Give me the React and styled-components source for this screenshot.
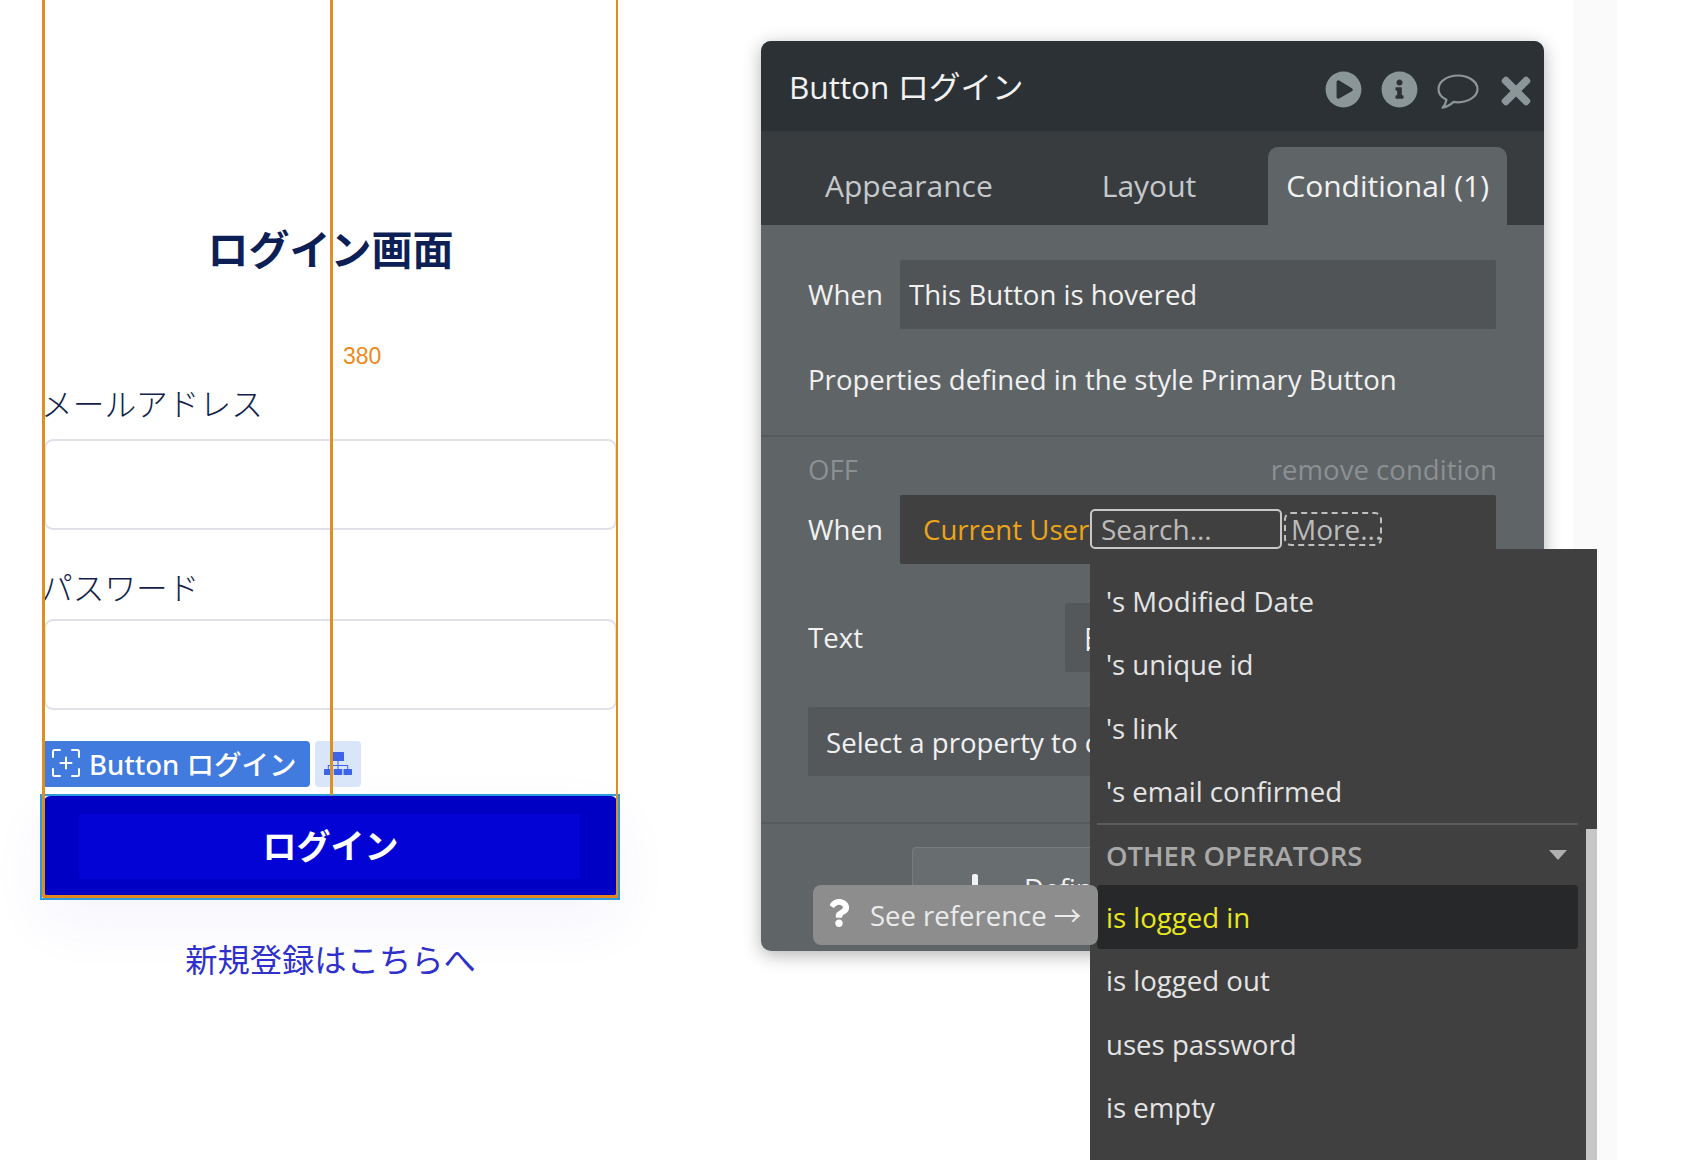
import React from 'react';
import styled, { createGlobalStyle } from 'styled-components';
import { FaPlayCircle, FaInfoCircle, FaTimes, FaQuestion, FaPlus } from 'react-icons/fa';

const Global = createGlobalStyle`
  html, body { margin: 0; padding: 0; background: #fff; }
  * { box-sizing: border-box; }
`;
const UI = `"Open Sans", "Noto Sans CJK JP", sans-serif`;
const JP = `"Noto Sans CJK JP", "Liberation Sans", sans-serif`;

const Page = styled.div`
  position: relative; display: flex; width: 1682px; height: 1160px; overflow: hidden; background: #fff;
`;
const Canvas = styled.div`
  position: relative; width: 761px; flex: none; padding: 223px 0 0 44px;
`;
const Form = styled.div`
  display: flex; flex-direction: column; width: 573px; font-family: ${JP};
`;
const Title = styled.h1`
  margin: 0; height: 48px; line-height: 48px; font-size: 41px; font-weight: 700; text-align: center; color: #0d1f55;
`;
const FieldLabel = styled.div`
  margin: ${p => p.$top}px 0 0 -3px; height: 44px; line-height: 44px; font-size: 31.700px; font-weight: 300; color: #12224a; white-space: nowrap;
`;
const TextInput = styled.div`
  margin-top: ${p => p.$top}px; height: 91px; border: 2px solid #e0e1e8; border-radius: 9px; background: #fff;
`;
const TagRow = styled.div`
  display: flex; gap: 5px; margin-top: 31px; height: 46px; position: relative; z-index: 1;
`;
const NameTag = styled.div`
  display: flex; align-items: center; gap: 9px; width: 266px; padding: 0 0 2px 8px; background: #417bdd; border-radius: 0 4px 4px 0;
  color: #fff; font-family: "Noto Sans", ${JP}; font-size: 27.500px; font-weight: 500; white-space: nowrap;
`;
const TreeTag = styled.div`
  display: flex; align-items: center; justify-content: center; width: 46px; background: #d9e5f8; border-radius: 4px; color: #3d63e8;
`;
const LoginButton = styled.div`
  position: relative; display: flex; align-items: center; justify-content: center; margin-top: 9px; height: 101.500px; padding-bottom: 4px;
  background: #0000c4; border-radius: 6px; box-shadow: 0 24px 60px rgba(70, 70, 220, .06);
  color: #fff; font-size: 34px; font-weight: 700;
`;
const ButtonInner = styled.div`
  position: absolute; left: 35px; right: 37px; top: 18px; bottom: 18px; background: #0303d6;
`;
const ButtonText = styled.span`
  position: relative;
`;
const Outline = styled.div`
  position: absolute; left: -4px; right: -3px; top: -2px; bottom: -3px; border: 2.500px solid #2f9bdc; pointer-events: none;
`;
const RegisterLink = styled.div`
  margin-top: 39px; height: 44px; line-height: 44px; font-size: 32.300px; font-weight: 400; text-align: center; color: #3030cc;
`;
const Guide = styled.div`
  position: absolute; top: 0; left: ${p => p.$x}px; width: 2.500px; height: ${p => p.$h}px; background: #df8f1f; z-index: 2;
`;
const GuideBase = styled.div`
  position: absolute; left: 43px; top: 895px; width: 575px; height: 3px; background: #e0881f; z-index: 2;
`;
const Measure = styled.div`
  position: absolute; left: 343px; top: 342px; font: 23px/28px "Liberation Sans", sans-serif; color: #ec8a1c; z-index: 2;
`;

const Panel = styled.section`
  display: flex; flex-direction: column; width: 783px; height: 910px; margin-top: 41px; flex: none; overflow: hidden;
  border-radius: 10px; background: #5f6467; box-shadow: 0 4px 18px rgba(0, 0, 0, .3); font-family: ${UI}; color: #f1f1f1;
`;
const Strip = styled.div`
  width: 44px; height: 100%; margin-left: 29px; background: #fafafa; flex: none;
`;
const Header = styled.header`
  display: flex; align-items: center; height: 90px; padding: 0 14px 0 28px; background: #2c3135; flex: none;
`;
const HeaderTitle = styled.div`
  flex: 1; font-size: 31.500px; margin-top: -2px; color: #f2f2f2; white-space: nowrap;
`;
const Icons = styled.div`
  display: flex; align-items: center; gap: 19px; margin-top: 7px; color: #8b9699;
`;
const CloseIcon = styled(FaTimes)`
  margin: 0 -7px 0 -3px; transform: translateY(1px);
`;
const BubbleSvg = styled.svg`
  transform: translateY(2px);
`;
const TabBar = styled.nav`
  display: flex; align-items: flex-end; height: 94px; padding-left: 46px; background: #383c3f; flex: none;
`;
const Tab = styled.div`
  height: 78px; margin-left: ${p => p.$gap}px; padding: 0 18px; line-height: 78px; font-size: 30px; white-space: nowrap;
  border-radius: 10px 10px 0 0; color: ${p => (p.$active ? '#f2f2f2' : '#c5c9cb')}; background: ${p => (p.$active ? '#5f6467' : 'transparent')};
`;
const Section = styled.div`
  padding: ${p => p.$pad}; padding-left: 47px; padding-right: 48px; border-bottom: 2px solid #565a5d; flex: none;
`;
const Row = styled.div`
  display: flex; align-items: center; margin-top: ${p => p.$top || 0}px;
`;
const RowLabel = styled.div`
  width: ${p => p.$w}px; flex: none; padding-bottom: 2px; font-size: 27.600px; color: #f1f1f1;
`;
const Field = styled.div`
  flex: 1; display: flex; align-items: center; height: 69px; padding: 0 0 ${p => (p.$flat ? 0 : 2)}px ${p => p.$pad}px; min-width: 0; overflow: hidden;
  background: ${p => p.$bg}; font-size: 27.600px; white-space: nowrap; border-radius: 2px; color: #f1f1f1;
`;
const Plain = styled.div`
  margin-top: 28px; height: 44px; line-height: 44px; font-size: 27.600px; white-space: nowrap;
`;
const SpaceRow = styled.div`
  display: flex; justify-content: space-between; height: 40px; margin-right: -1px; line-height: 40px; font-size: 27.600px; color: #8b9093;
`;
const Operand = styled.span`
  width: 167px; flex: none; color: #eaa51a;
`;
const SearchBox = styled.div`
  width: 192px; height: 40px; flex: none; padding-left: 9px; line-height: 36px; border: 2px solid #c8c8c8; border-radius: 5px; color: #bbb; font-size: 28px;
`;
const MoreBox = styled.div`
  width: 98px; height: 34px; margin-left: 2px; flex: none; padding-left: 5px; line-height: 30px; border: 2px dashed #c0c0c0; border-radius: 7px; color: #bbb; font-size: 28px;
`;
const DefineButton = styled.div`
  display: flex; align-items: center; gap: 33px; width: 500px; height: 86px; margin: 23px 0 0 151px; padding: 0 0 5px 46px; white-space: nowrap;
  background: #686d70; border: 1px solid #787c7f; border-radius: 4px; font-size: 27.600px; color: #f1f1f1;
`;

const Dropdown = styled.div`
  position: absolute; left: 1090px; top: 549px; width: 507px; height: 611px; padding: 20.500px 19px 0 0; background: #404040; font-family: ${UI}; z-index: 3;
`;
const Thumb = styled.div`
  position: absolute; right: 0; top: 280px; bottom: 0; width: 11px; background: #c6c6c6;
`;
const Item = styled.div`
  display: flex; align-items: center; height: 63.300px; margin-left: 7px; padding-left: 9px; font-size: 27.600px; white-space: nowrap; border-radius: 4px;
  color: ${p => (p.$selected ? '#e8e81e' : '#e4e4e4')}; background: ${p => (p.$selected ? '#272829' : 'transparent')};
`;
const Group = styled.div`
  display: flex; align-items: center; justify-content: space-between; height: 62.800px; margin-left: 7px; padding: 0 11px 0 9px;
  border-top: 2px solid #5b5b5b; font-size: 27.400px; font-weight: 600; color: #a9a9a9;
`;
const Caret = styled.span`
  width: 0; height: 0; border-left: 9px solid transparent; border-right: 9px solid transparent; border-top: 10px solid #b0b0b0;
`;
const Tooltip = styled.div`
  position: absolute; left: 813px; top: 885px; width: 285px; height: 60px; display: flex; align-items: center; gap: 17px; padding: 0 0 2px 12px;
  background: #8d8d8d; border-radius: 8px; font-family: ${UI}; font-size: 27.500px; color: #ebebeb; white-space: nowrap; z-index: 4;
`;
const HelpIcon = styled.span`
  display: flex; margin-top: -3px; color: #fff;
`;

const Frame = () => (
  <svg width="28" height="28" viewBox="0 0 28 28" fill="none" stroke="currentColor" strokeWidth="2" strokeLinecap="round">
    <path d="M1 8V2.500A1.500 1.500 0 0 1 2.500 1H8M20 1h5.500A1.500 1.500 0 0 1 27 2.500V8M27 20v5.500a1.500 1.500 0 0 1-1.500 1.500H20M8 27H2.500A1.500 1.500 0 0 1 1 25.500V20M14 8.500v11M8.500 14h11" />
  </svg>
);
const Bubble = () => (
  <BubbleSvg width="42" height="36" viewBox="0 0 42 36" fill="none" stroke="currentColor" strokeWidth="2.200" strokeLinejoin="round">
    <path d="M21 1.500C10.500 1.500 1.500 7.500 1.500 15c0 4.500 3 8.400 8 10.800-.6 3-1.800 5.700-4 8 4.400-1 8.300-3.200 11-5.900 1.400.3 3 .4 4.500.4 10.500 0 19.500-6 19.500-13.300S31.500 1.500 21 1.500z" />
  </BubbleSvg>
);
const Tree = () => (
  <svg width="28" height="23" viewBox="0 0 28 23" fill="currentColor">
    <rect x="8" y="0" width="12" height="9" rx="0.500" />
    <rect x="13.500" y="9" width="1" height="8" />
    <rect x="4" y="13" width="20" height="1" />
    <rect x="3.800" y="13" width="1" height="4" />
    <rect x="23.200" y="13" width="1" height="4" />
    <rect x="0" y="17" width="8.500" height="6" rx="0.500" />
    <rect x="9.750" y="17" width="8.500" height="6" rx="0.500" />
    <rect x="19.500" y="17" width="8.500" height="6" rx="0.500" />
  </svg>
);

const rows = ["'s Modified Date", "'s unique id", "'s link", "'s email confirmed"];
const more = ['is logged out', 'uses password', 'is empty'];

export default function App() {
  return (
    <Page>
      <Global />
      <Canvas>
        <Guide $x={42} $h={897} />
        <Guide $x={330} $h={795} />
        <Guide $x={615.5} $h={897} />
        <GuideBase />
        <Measure>380</Measure>
        <Form>
          <Title>ログイン画面</Title>
          <FieldLabel $top={109}>メールアドレス</FieldLabel>
          <TextInput $top={15} />
          <FieldLabel $top={34}>パスワード</FieldLabel>
          <TextInput $top={10.5} />
          <TagRow>
            <NameTag><Frame />Button ログイン</NameTag>
            <TreeTag><Tree /></TreeTag>
          </TagRow>
          <LoginButton>
            <ButtonInner />
            <ButtonText>ログイン</ButtonText>
            <Outline />
          </LoginButton>
          <RegisterLink>新規登録はこちらへ</RegisterLink>
        </Form>
      </Canvas>

      <Panel>
        <Header>
          <HeaderTitle>Button ログイン</HeaderTitle>
          <Icons>
            <FaPlayCircle size={37} />
            <FaInfoCircle size={37} />
            <Bubble />
            <CloseIcon size={42} />
          </Icons>
        </Header>
        <TabBar>
          <Tab $gap={0}>Appearance</Tab>
          <Tab $gap={73}>Layout</Tab>
          <Tab $gap={54} $active>Conditional (1)</Tab>
        </TabBar>
        <Section $pad="35px 0 34px">
          <Row>
            <RowLabel $w={92}>When</RowLabel>
            <Field $bg="#505457" $pad={9}>This Button is hovered</Field>
          </Row>
          <Plain>Properties defined in the style Primary Button</Plain>
        </Section>
        <Section $pad="12px 0 46px">
          <SpaceRow><span>OFF</span><span>remove condition</span></SpaceRow>
          <Row $top={6}>
            <RowLabel $w={92}>When</RowLabel>
            <Field $bg="#404040" $pad={23}>
              <Operand>Current User</Operand>
              <SearchBox>Search...</SearchBox>
              <MoreBox>More...</MoreBox>
            </Field>
          </Row>
          <Row $top={39}>
            <RowLabel $w={257}>Text</RowLabel>
            <Field $bg="#54585b" $pad={17}>日本語</Field>
          </Row>
          <Row $top={35}>
            <Field $bg="#54585b" $pad={18} $flat>Select a property to change when true</Field>
          </Row>
        </Section>
        <DefineButton><FaPlus size={32} />Define another condition</DefineButton>
      </Panel>
      <Strip />

      <Dropdown>
        {rows.map(r => <Item key={r}>{r}</Item>)}
        <Group>OTHER OPERATORS<Caret /></Group>
        <Item $selected>is logged in</Item>
        {more.map(r => <Item key={r}>{r}</Item>)}
        <Thumb />
      </Dropdown>
      <Tooltip>
        <HelpIcon><FaQuestion size={28} /></HelpIcon>
        See reference →
      </Tooltip>
    </Page>
  );
}
